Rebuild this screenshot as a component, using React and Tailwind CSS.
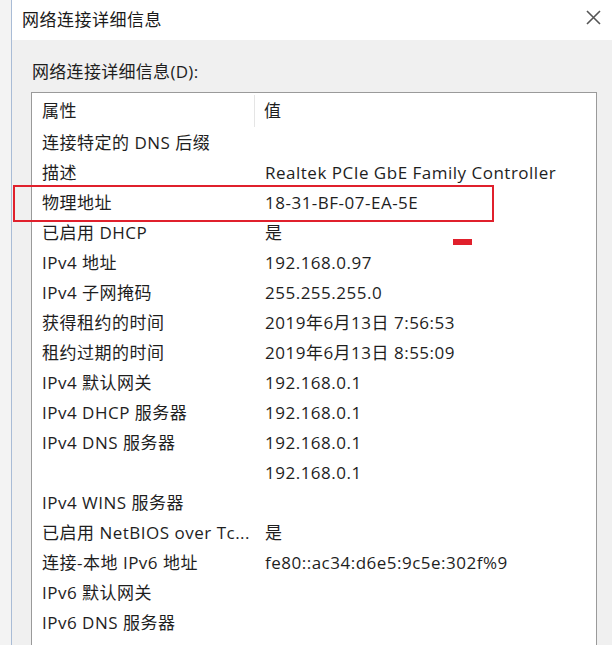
import React from "react";

const rows = [
  ["连接特定的 DNS 后缀", ""],
  ["描述", "Realtek PCIe GbE Family Controller"],
  ["物理地址", "18-31-BF-07-EA-5E"],
  ["已启用 DHCP", "是"],
  ["IPv4 地址", "192.168.0.97"],
  ["IPv4 子网掩码", "255.255.255.0"],
  ["获得租约的时间", "2019年6月13日 7:56:53"],
  ["租约过期的时间", "2019年6月13日 8:55:09"],
  ["IPv4 默认网关", "192.168.0.1"],
  ["IPv4 DHCP 服务器", "192.168.0.1"],
  ["IPv4 DNS 服务器", "192.168.0.1"],
  ["", "192.168.0.1"],
  ["IPv4 WINS 服务器", ""],
  ["已启用 NetBIOS over Tc...", "是"],
  ["连接-本地 IPv6 地址", "fe80::ac34:d6e5:9c5e:302f%9"],
  ["IPv6 默认网关", ""],
  ["IPv6 DNS 服务器", ""],
];

const font = {
  fontFamily: '"Open Sans", "Noto Sans CJK SC", sans-serif',
};

export default function App() {
  return (
    <div
      className="relative flex w-[612px] h-[645px] overflow-hidden bg-[#f3f3f3] text-[#1e1e1e]"
      style={font}
    >
      {/* strip left of the window */}
      <div className="w-[11px] shrink-0" />

      {/* dialog window */}
      <div className="flex flex-col flex-1 border-l border-[#a9bcd6] bg-[#f0f0f0]">
        {/* title bar */}
        <div className="h-[40px] shrink-0 bg-white flex items-center justify-between pl-[10px] pr-[10px]">
          <span className="text-[17px] tracking-[0.5px] text-[#1a1a1a]">网络连接详细信息</span>
          <svg width="17" height="17" viewBox="0 0 17 17" className="mt-[-6px]">
            <path d="M2 2 L15 15 M15 2 L2 15" stroke="#555" strokeWidth="1.6" />
          </svg>
        </div>

        {/* body */}
        <div className="flex flex-col pl-[19px] pt-[21px]">
          <div className="text-[17px] tracking-[0.3px] leading-[22px] pl-[1px]">网络连接详细信息(D):</div>

          {/* list view */}
          <div className="mt-[9px] w-[566px] h-[560px] border border-[#9a9a9a] bg-white overflow-hidden text-[17px] tracking-[0.5px]">
            <div className="flex h-[35px] items-center">
              <div className="w-[223px] h-[32px] pl-[10px] flex items-center border-r border-[#e5e5e5]">属性</div>
              <div className="pl-[9px]">值</div>
            </div>
            {rows.map(([k, v], i) => (
              <div key={i} className="flex h-[30px] items-center">
                <div className="w-[224px] pl-[10px] whitespace-nowrap">{k}</div>
                <div className="pl-[9px] whitespace-nowrap">{v}</div>
              </div>
            ))}
          </div>
        </div>
      </div>

      {/* red annotations */}
      <div className="absolute left-[13px] top-[185px] w-[481px] h-[37px] border-[2.5px] border-[#e0202c]" />
      <div className="absolute left-[453px] top-[239px] w-[19px] h-[6px] bg-[#e0202c]" />
    </div>
  );
}
